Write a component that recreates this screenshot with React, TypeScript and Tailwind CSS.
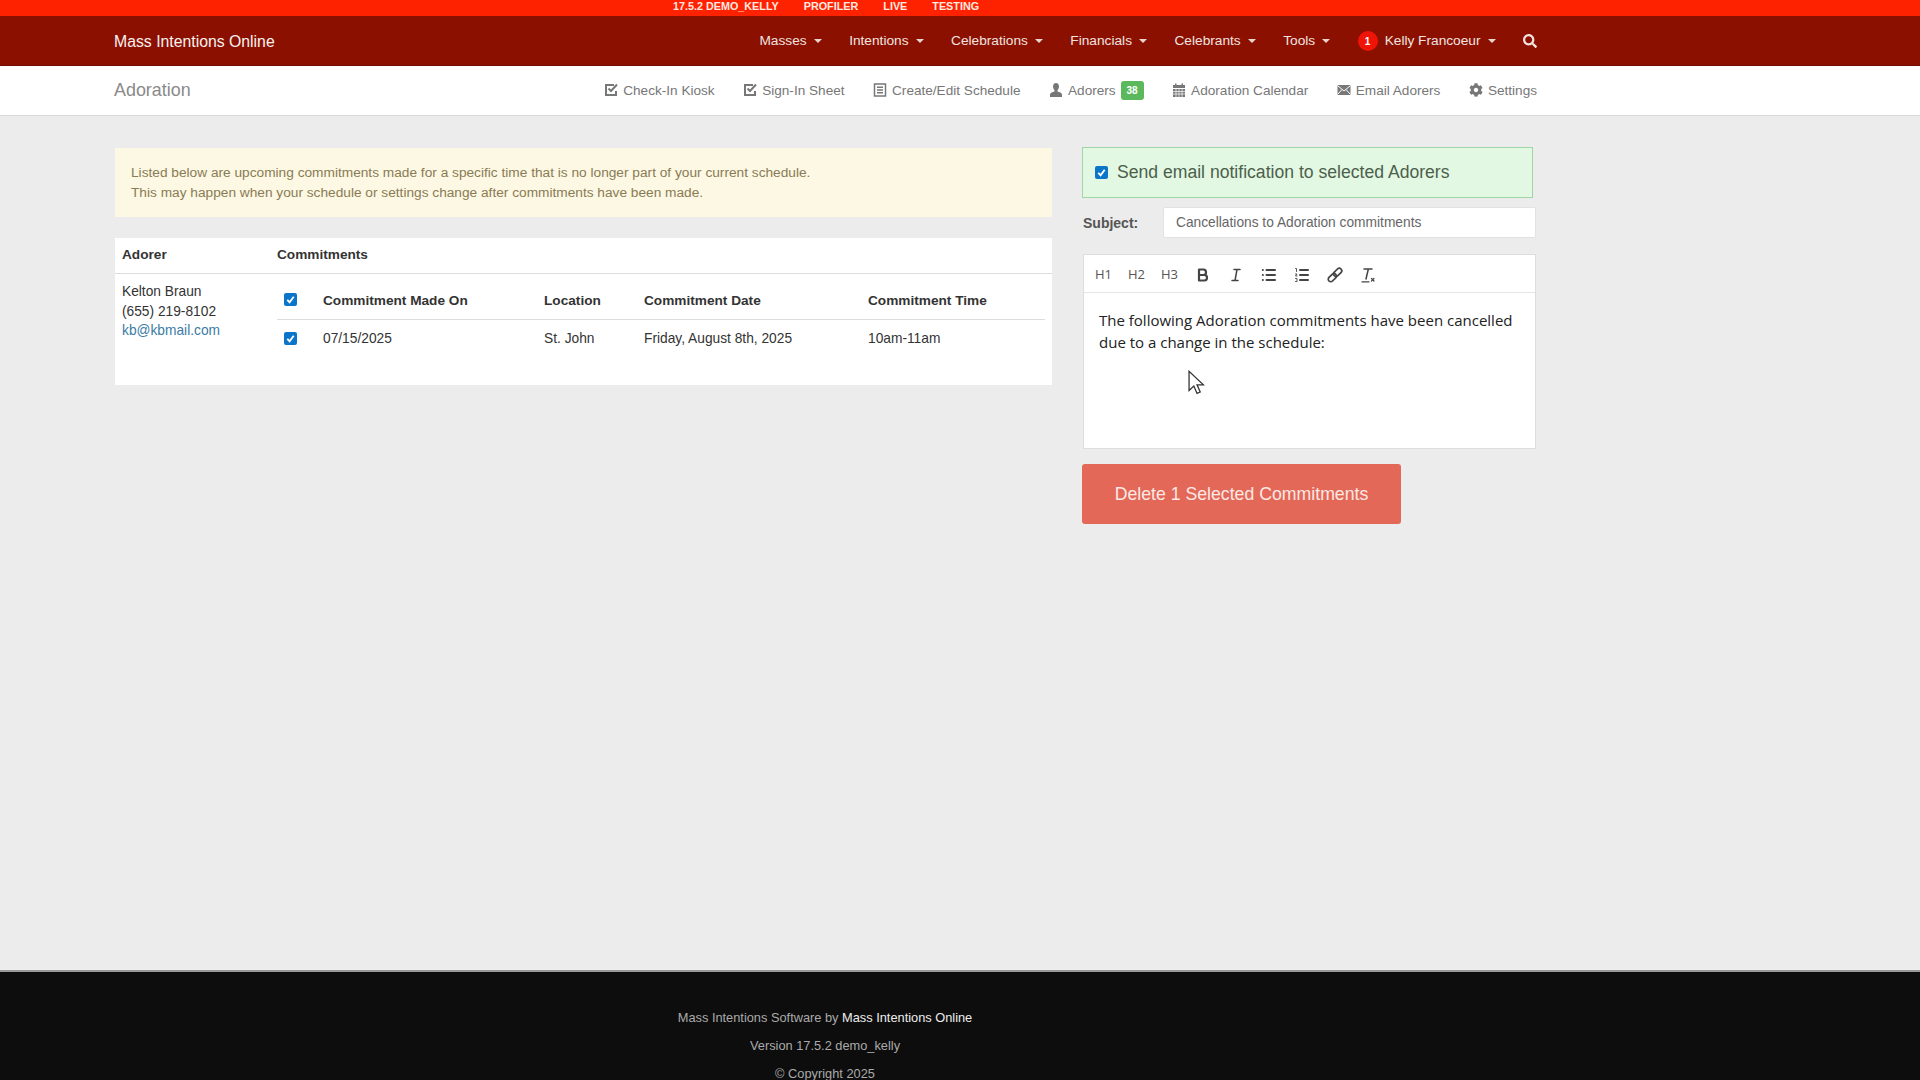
import { FaCog, FaSearch } from "react-icons/fa";
import type { ReactNode } from "react";

const Caret = () => (
  <span className="ml-[7px] inline-block h-0 w-0 border-x-[4px] border-t-[4px] border-x-transparent border-t-[#e8d5d0] align-middle" />
);

const NavItem = ({ label }: { label: string }) => (
  <span className="flex items-center">
    {label}
    <Caret />
  </span>
);

const SubItem = ({ icon, label, children }: { icon: ReactNode; label: string; children?: ReactNode }) => (
  <span className="flex items-center gap-[5px]">
    <span className="mb-[2px] flex">{icon}</span>
    {label}
    {children}
  </span>
);

const Glyph = ({ children }: { children: ReactNode }) => (
  <svg viewBox="0 0 14 14" className="h-[14px] w-[14px]" fill="none" stroke="#777" strokeWidth="2">
    {children}
  </svg>
);

const CheckGlyph = () => (
  <Glyph>
    <path d="M10 2H2v10h10V8" />
    <path d="M4.5 5.5 7 8l6-6.5" />
  </Glyph>
);

const ListGlyph = () => (
  <Glyph>
    <rect x="1.5" y="1" width="11" height="12" strokeWidth="1.5" />
    <path d="M4 4.2h6M4 7h6M4 9.8h6" strokeWidth="1.4" />
  </Glyph>
);

const UserGlyph = () => (
  <svg viewBox="0 0 14 14" className="h-[14px] w-[14px]" fill="#777">
    <path d="M7 0c2 0 3 1.5 3 3.6 0 1.5-.7 2.9-1.5 3.6v1.2c1.900.5 4.500 1.300 4.500 3V14H1v-2.600c0-1.700 2.600-2.500 4.500-3V7.200C4.700 6.500 4 5.100 4 3.600 4 1.500 5 0 7 0Z" />
  </svg>
);

const CalendarGlyph = () => (
  <svg viewBox="0 0 14 14" className="h-[14px] w-[14px]" fill="#777">
    <path d="M1 2h2V.5h1.500V2h5V.5H11V2h2v3H1V2ZM1 6h12v8H1V6Z" />
    <path d="M1 8.500h12M1 11h12M4 6v8M7 6v8M10 6v8" stroke="#fff" strokeWidth="0.7" />
  </svg>
);

const EnvelopeGlyph = () => (
  <svg viewBox="0 0 14 14" className="h-[14px] w-[14px]" fill="#777">
    <rect x="0.500" y="2" width="13" height="10" />
    <path d="M.5 2.500 7 8l6.500-5.500M.5 11.500 5 6.500M13.500 11.500 9 6.500" fill="none" stroke="#fff" strokeWidth="1" />
  </svg>
);

const Check = () => (
  <span className="flex h-[13px] w-[13px] items-center justify-center rounded-[2px] bg-[#0b76c9]">
    <svg viewBox="0 0 12 12" className="h-[11px] w-[11px]" fill="none" stroke="#fff" strokeWidth="2">
      <path d="M2.5 6.500 5 9l4.500-6" />
    </svg>
  </span>
);

const ToolIcon = ({ children }: { children: ReactNode }) => (
  <span className="flex w-[33px] items-center justify-center">
    <svg viewBox="0 0 18 18" className="h-[18px] w-[18px]" fill="none" stroke="#444" strokeWidth="2" strokeLinecap="round" strokeLinejoin="round">
      {children}
    </svg>
  </span>
);

const Heading = ({ label }: { label: string }) => (
  <span className="flex w-[33px] items-center justify-center font-['Open_Sans',sans-serif] text-[13px] text-[#555]">{label}</span>
);

export default function App() {
  return (
    <div className="flex h-screen flex-col overflow-hidden bg-[#ececec] font-['Liberation_Sans',Arial,sans-serif] text-[13.75px] text-[#333]">
      <div className="flex h-4 items-center justify-center gap-[25px] bg-[#ff2200] pr-[268px] pb-[3px] text-[10.8px] font-bold text-[#ffe9e0]">
        <span>17.5.2 DEMO_KELLY</span>
        <span>PROFILER</span>
        <span>LIVE</span>
        <span>TESTING</span>
      </div>

      <div className="flex h-[50px] items-center justify-between border-b border-[#6d0d00] bg-[#8b1000] pt-[2px] pr-[383px] pl-[114px] text-[13.7px] text-[#f0e4e0]">
        <span className="text-[15.8px] text-[#f8f2f0]">Mass Intentions Online</span>
        <div className="flex items-center gap-[27.5px]">
          <NavItem label="Masses" />
          <NavItem label="Intentions" />
          <NavItem label="Celebrations" />
          <NavItem label="Financials" />
          <NavItem label="Celebrants" />
          <NavItem label="Tools" />
          <span className="flex items-center">
            <span className="mr-[7px] flex h-[20px] w-[20px] items-center justify-center rounded-full bg-[#f01408] text-[10px] font-bold text-white">1</span>
            Kelly Francoeur
            <Caret />
          </span>
          <FaSearch className="h-[14px] w-[14px] text-[#f0e4e0]" />
        </div>
      </div>

      <div className="flex h-[50px] items-center justify-between border-b border-[#d9d9d9] bg-white pr-[383px] pl-[114px] text-[13.6px] text-[#777]">
        <span className="text-[17.9px] text-[#8a8a8a]">Adoration</span>
        <div className="flex items-center gap-[28.5px] pt-[1px]">
          <SubItem icon={<CheckGlyph />} label="Check-In Kiosk" />
          <SubItem icon={<CheckGlyph />} label="Sign-In Sheet" />
          <SubItem icon={<ListGlyph />} label="Create/Edit Schedule" />
          <SubItem icon={<UserGlyph />} label="Adorers">
            <span className="flex h-[19px] w-[23px] items-center justify-center rounded-[3px] bg-[#5cb85c] text-[10px] font-bold text-white">38</span>
          </SubItem>
          <SubItem icon={<CalendarGlyph />} label="Adoration Calendar" />
          <SubItem icon={<EnvelopeGlyph />} label="Email Adorers" />
          <SubItem icon={<FaCog className="h-[14px] w-[14px]" />} label="Settings" />
        </div>
      </div>

      <div className="flex min-h-0 flex-1 items-start gap-[30px] pt-[31px] pl-[115px]">
        <div className="flex w-[937px] flex-col gap-[21px] pt-[1px]">
          <div className="flex h-[69px] flex-col justify-center gap-[1px] bg-[#fcf8e3] pb-[1px] pl-[16px] text-[13.7px] leading-[19px] text-[#8a7b55]">
            <p>Listed below are upcoming commitments made for a specific time that is no longer part of your current schedule.</p>
            <p>This may happen when your schedule or settings change after commitments have been made.</p>
          </div>

          <div className="h-[147px] bg-white">
            <div className="flex h-[36px] items-center border-b border-[#ddd] pb-[1px] pl-[7px] text-[13.65px] font-bold">
              <span className="w-[155px]">Adorer</span>
              <span>Commitments</span>
            </div>
            <div className="flex pl-[7px]">
              <div className="w-[155px] pt-[8px] leading-[19.5px]">
                <p>Kelton Braun</p>
                <p>(655) 219-8102</p>
                <p className="text-[#3a7ca5]">kb@kbmail.com</p>
              </div>
              <div className="mr-[7px] flex-1">
                <div className="flex h-[46px] items-center border-b border-[#ddd] pt-[10px] text-[13.65px] font-bold">
                  <span className="w-[46px] pb-[5px] pl-[7px]">
                    <Check />
                  </span>
                  <span className="w-[221px]">Commitment Made On</span>
                  <span className="w-[100px]">Location</span>
                  <span className="w-[224px]">Commitment Date</span>
                  <span>Commitment Time</span>
                </div>
                <div className="flex h-[37px] items-center pt-[2px]">
                  <span className="w-[46px] pb-[2px] pl-[7px]">
                    <Check />
                  </span>
                  <span className="w-[221px]">07/15/2025</span>
                  <span className="w-[100px]">St. John</span>
                  <span className="w-[224px]">Friday, August 8th, 2025</span>
                  <span>10am-11am</span>
                </div>
              </div>
            </div>
          </div>
        </div>

        <div className="flex w-[454px] flex-col">
          <div className="flex h-[51px] w-[451px] items-center gap-[9px] border border-[#9ed6a4] bg-[#e3f8e3] pl-[12px] text-[17.6px] text-[#4c5f4c]">
            <Check />
            Send email notification to selected Adorers
          </div>
          <div className="mt-[9px] flex h-[31px] items-center">
            <span className="w-[81px] pt-[1px] pl-[1px] text-[14px] font-bold text-[#555]">Subject:</span>
            <div className="flex h-full flex-1 items-center rounded-[2px] border border-[#e2e2e2] bg-white pt-[2px] pl-[12px] text-[#666]">
              Cancellations to Adoration commitments
            </div>
          </div>
          <div className="mt-[16px] ml-[1px] h-[195px] border border-[#ddd] bg-white">
            <div className="flex h-[38px] items-center border-b border-[#e5e5e5] pt-[2px] pl-[3px]">
              <Heading label="H1" />
              <Heading label="H2" />
              <Heading label="H3" />
              <ToolIcon>
                <path d="M5 3.500h4.500A2.700 2.700 0 0 1 12 6.200 2.700 2.700 0 0 1 9.500 9H5V3.500Z" strokeWidth="2.200" />
                <path d="M5 9h5.500a2.700 2.700 0 0 1 2.500 2.800 2.700 2.700 0 0 1-2.500 2.700H5V9Z" strokeWidth="2.200" />
              </ToolIcon>
              <ToolIcon>
                <path d="M7 3.500h6M5 14.500h6M8 14.500l2-11" strokeWidth="1.500" />
              </ToolIcon>
              <ToolIcon>
                <path d="M6.500 4h8.500M6.500 9h8.500M6.500 14h8.500M2.800 4h.1M2.800 9h.1M2.800 14h.1" />
              </ToolIcon>
              <ToolIcon>
                <path d="M7 4h8M7 9h8M7 14h8" />
                <path d="M2.500 2.500h1v3M2.500 8h1.500L2.500 10H4M2.500 12.500H4v3H2.500" strokeWidth="0.900" />
              </ToolIcon>
              <ToolIcon>
                <g transform="rotate(-45 9 9)" strokeWidth="1.700">
                  <rect x="0.500" y="6.500" width="9.500" height="5" rx="2.500" />
                  <rect x="8" y="6.500" width="9.500" height="5" rx="2.500" />
                </g>
              </ToolIcon>
              <ToolIcon>
                <path d="M5 3h8M7 13 9.350 3" strokeWidth="1.500" />
                <path d="M12.500 12.500l2.500 2.500M15 12.500l-2.500 2.500" strokeWidth="1.200" />
                <path d="M3 15.800h7" strokeWidth="1.300" />
              </ToolIcon>
            </div>
            <p className="px-[15px] pt-[16px] font-['Open_Sans',sans-serif] text-[15px] leading-[22px] text-[#222]">
              The following Adoration commitments have been cancelled due to a change in the schedule:
            </p>
          </div>
          <div className="mt-[15px] flex h-[60px] w-[319px] items-center justify-center rounded-[3px] bg-[#e46857] text-[17.7px] text-[#fbe9e5]">
            Delete 1 Selected Commitments
          </div>
        </div>
      </div>

      <div className="flex h-[110px] shrink-0 flex-col items-center gap-[10px] border-t-2 border-[#999] bg-[#0d0d0d] pt-[37px] pr-[270px] text-[12.8px] leading-[18px] text-[#aaa]">
        <p>
          Mass Intentions Software by <span className="text-[#eee]">Mass Intentions Online</span>
        </p>
        <p>Version 17.5.2 demo_kelly</p>
        <p>© Copyright 2025</p>
      </div>

      <svg viewBox="0 0 16 24" className="absolute top-[370px] left-[1188px] h-[26px] w-[17px]" fill="#fff" stroke="#333" strokeWidth="1.200">
        <path d="M1 1v18l4.500-4.200 3 7 3-1.300-3-6.800H14.500Z" />
      </svg>
    </div>
  );
}
